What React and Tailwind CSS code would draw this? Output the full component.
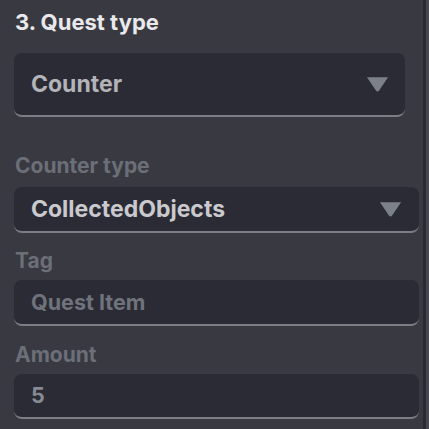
import React from "react";

const Caret = ({ className }) => (
  <svg viewBox="0 0 24 16" className={className}>
    <path d="M1 1 L23 1 L13.5 15 Q12 16.5 10.5 15 Z" fill="#7c8189" />
  </svg>
);

const Field = ({ children, right, className }) => (
  <div
    className={
      "flex items-center justify-between bg-[#2b2b35] rounded-lg border-b-2 border-[#7d7d83] pl-[17px] " +
      className
    }
  >
    {children}
    {right}
  </div>
);

const Label = ({ children, className }) => (
  <div className={"text-[21px] font-bold text-[#6b6f77] leading-none " + className}>{children}</div>
);

export default function App() {
  return (
    <div
      className="w-[429px] h-[429px] bg-[#393942] flex overflow-hidden"
      style={{ fontFamily: "Inter, 'Noto Sans', sans-serif" }}
    >
      <div className="flex-1 flex flex-col pl-[14px] pr-[4px]">
        <h1 className="mt-[11px] ml-[1px] text-[22px] font-bold text-[#e9e9ec] leading-none">
          3. Quest type
        </h1>

        <Field
          className="mt-[20px] w-[391px] h-[64px] pr-[16px]"
          right={<Caret className="w-[23px] h-[16px]" />}
        >
          <span className="text-[23px] font-bold text-[#b3b3b8]">Counter</span>
        </Field>

        <Label className="mt-[38px] ml-[1px]">Counter type</Label>
        <Field
          className="mt-[11px] h-[46px] pr-[17px]"
          right={<Caret className="w-[23px] h-[16px]" />}
        >
          <span className="text-[23px] font-bold text-[#cacace]">CollectedObjects</span>
        </Field>

        <Label className="mt-[17px] ml-[1px]">Tag</Label>
        <Field className="mt-[9px] h-[46px]">
          <span className="text-[21.5px] font-bold text-[#6f737b]">Quest Item</span>
        </Field>

        <Label className="mt-[18px] ml-[1px]">Amount</Label>
        <Field className="mt-[9px] h-[45px]">
          <span className="text-[21.5px] font-bold text-[#878a92]">5</span>
        </Field>
      </div>
      <div className="w-[3px] bg-[#2a2a31]" />
      <div className="w-[3px] bg-[#46464e]" />
    </div>
  );
}
